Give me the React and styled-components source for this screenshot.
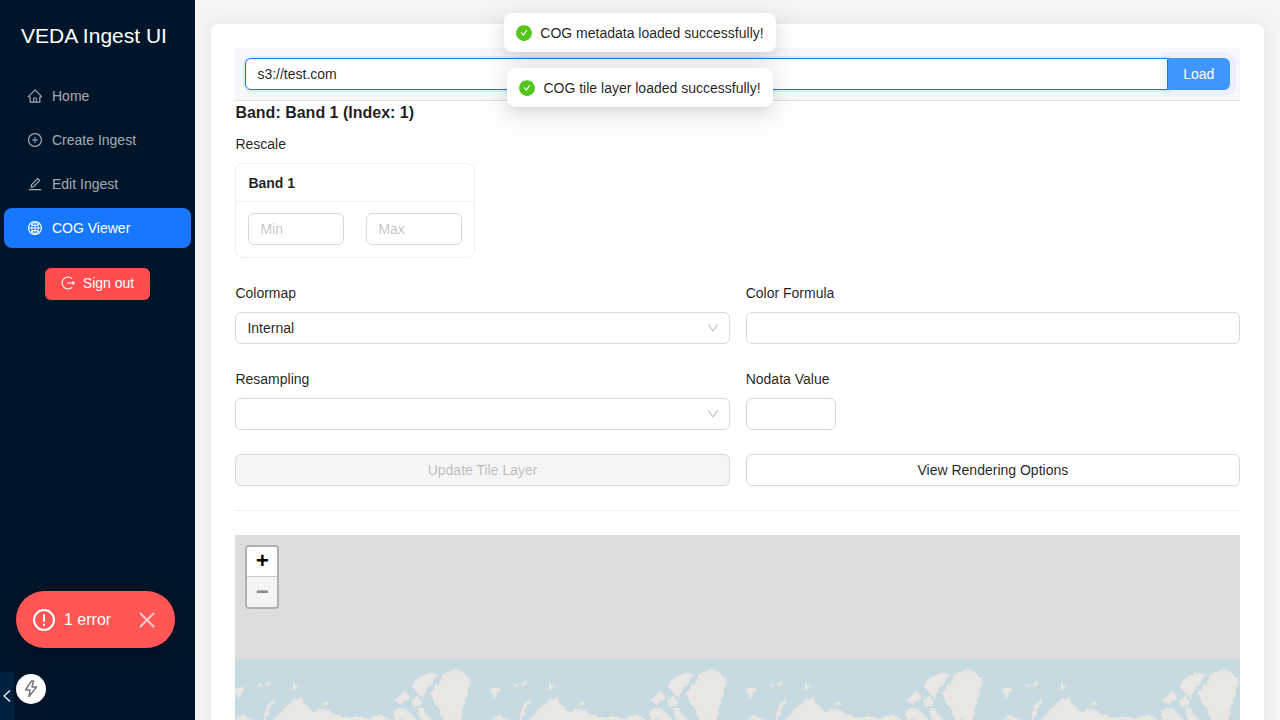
import React from 'react';
import styled, { createGlobalStyle } from 'styled-components';
import {
  AiOutlineHome, AiOutlinePlusCircle, AiOutlineEdit, AiOutlineGlobal,
  AiFillCheckCircle, AiOutlineDown,
} from 'react-icons/ai';

const Global = createGlobalStyle`
  html, body { margin: 0; padding: 0; height: 720px; overflow: hidden; background: #f5f5f5; }
  * { box-sizing: border-box; }
  body { font-family: "Liberation Sans", Arial, sans-serif; font-size: 14px; color: rgba(0,0,0,.88); }
`;

const Shell = styled.div`
  display: flex;
  width: 1280px;
  height: 720px;
  overflow: hidden;
  position: relative;
`;

const Sider = styled.aside`
  width: 195px;
  flex: none;
  height: 720px;
  background: #001529;
  display: flex;
  flex-direction: column;
  position: relative;
`;

const Brand = styled.div`
  color: #fff;
  font-size: 21px;
  line-height: 24px;
  padding: 24px 0 0 21px;
  height: 76px;
`;

const Menu = styled.nav`
  display: flex;
  flex-direction: column;
  gap: 4px;
  padding: 0 4px;
`;

const MenuItem = styled.div`
  height: 40px;
  border-radius: 8px;
  padding-left: 23px;
  display: flex;
  align-items: center;
  gap: 9px;
  color: ${p => (p.$active ? '#fff' : 'rgba(255,255,255,.65)')};
  background: ${p => (p.$active ? '#1677ff' : 'transparent')};
  svg { width: 16px; height: 16px; flex: none; }
`;

const SignOutRow = styled.div`
  display: flex;
  padding: 20px 0 0 45px;
`;

const SignOut = styled.button`
  width: 105px;
  height: 32px;
  border: 0;
  border-radius: 6px;
  background: #ff4d4f;
  color: #fff;
  font: 14px "Liberation Sans", Arial, sans-serif;
  display: flex;
  align-items: center;
  justify-content: center;
  gap: 8px;
  padding: 0 0 2px;
`;

const ErrorPill = styled.div`
  position: absolute;
  left: 16px;
  top: 591px;
  width: 159px;
  height: 57px;
  border-radius: 29px;
  background: #ff5555;
  color: #fff;
  display: flex;
  align-items: center;
  padding-left: 17px;
  font-size: 16px;
  box-shadow: 0 4px 24px rgba(0,0,0,.25);
`;

const PillText = styled.span`
  margin-left: 9px;
  width: 75px;
`;

const Collapse = styled.div`
  position: absolute;
  left: 0;
  top: 672px;
  width: 14px;
  height: 48px;
  background: #002140;
  display: flex;
  align-items: center;
  justify-content: center;
`;

const DevBadge = styled.div`
  position: absolute;
  left: 16px;
  top: 674px;
  width: 30px;
  height: 30px;
  border-radius: 50%;
  background: #fff;
  display: flex;
  align-items: center;
  justify-content: center;
  box-shadow: 0 2px 8px rgba(0,0,0,.2);
`;

const Main = styled.main`
  flex: 1;
  min-width: 0;
  padding: 24px 16px 0;
`;

const Card = styled.section`
  background: #fff;
  border-radius: 8px 8px 0 0;
  padding: 24px 24px 24px 24.4px;
  height: 720px;
  box-shadow: 0 0 20px rgba(0,0,0,.07);
`;

const UrlBar = styled.div`
  background: #f6f8fc;
  height: 53px;
  padding: 10px;
  border-bottom: 1px solid #dcdcdc;
  display: flex;
`;

const UrlGroup = styled.div`
  display: flex;
  flex: 1;
  height: 32px;
`;

const UrlInput = styled.div`
  flex: 1;
  border: 1px solid #1677ff;
  border-radius: 6px 0 0 6px;
  background: #fff;
  padding: 0 11px;
  line-height: 30px;
  box-shadow: 0 0 0 2px rgba(5,145,255,.1);
`;

const LoadButton = styled.button`
  width: 62.4px;
  border: 0;
  border-radius: 0 6px 6px 0;
  background: #4096ff;
  color: #fff;
  font: 14px "Liberation Sans", Arial, sans-serif;
  padding: 0;
  position: relative;
  box-shadow: 0 0 0 6px rgba(40,90,255,.05);
`;

const BandTitle = styled.div`
  font-size: 16px;
  font-weight: 700;
  line-height: 24px;
`;

const FieldLabel = styled.div`
  line-height: 22px;
  height: 22px;
  margin-bottom: 8px;
`;

const RescaleLabel = styled(FieldLabel)`
  margin-top: 8px;
`;

const BandCard = styled.div`
  width: 240px;
  height: 95px;
  margin-bottom: 24px;
  border: 1px solid #f0f0f0;
  border-radius: 8px;
`;

const BandHead = styled.div`
  height: 38px;
  border-bottom: 1px solid #f0f0f0;
  padding-left: 12px;
  font-weight: 700;
  line-height: 38px;
`;

const BandBody = styled.div`
  display: flex;
  justify-content: space-between;
  padding: 11px 12px 0;
`;

const Box = styled.div`
  height: 32px;
  width: ${p => p.$w || '100%'};
  border: 1px solid #d9d9d9;
  border-radius: 6px;
  padding: 0 11px;
  line-height: 30px;
  color: ${p => (p.$ph ? 'rgba(0,0,0,.25)' : 'rgba(0,0,0,.88)')};
  background: #fff;
  position: relative;
  display: flex;
  align-items: center;
`;

const Chevron = styled(AiOutlineDown)`
  position: absolute;
  right: 9px;
  top: 8px;
  width: 14px;
  height: 14px;
  color: rgba(0,0,0,.25);
`;

const FormGrid = styled.div`
  display: grid;
  grid-template-columns: 1fr 1fr;
  column-gap: 16px;
  row-gap: 24px;
`;

const Field = styled.div`
  min-width: 0;
`;

const Btn = styled.button`
  height: 32px;
  width: 100%;
  border: 1px solid #d9d9d9;
  border-radius: 6px;
  font: 14px "Liberation Sans", Arial, sans-serif;
  padding: 0;
  color: ${p => (p.disabled ? 'rgba(0,0,0,.25)' : 'rgba(0,0,0,.88)')};
  background: ${p => (p.disabled ? 'rgba(0,0,0,.04)' : '#fff')};
  box-shadow: ${p => (p.disabled ? 'none' : '0 2px 0 rgba(0,0,0,.02)')};
`;

const Divider = styled.hr`
  border: 0;
  border-top: 1px solid #f0f0f0;
  margin: 24px 0;
`;

const MapBox = styled.div`
  background: #dddddd;
  height: 185px;
  position: relative;
  overflow: hidden;
  padding-top: 124px;
`;

const Ocean = styled.svg`
  display: block;
  width: 100%;
  height: 61px;
  background: #c8dae1;
`;

const Zoom = styled.div`
  position: absolute;
  left: 10px;
  top: 10px;
  width: 34px;
  border: 2px solid rgba(0,0,0,.2);
  border-radius: 4px;
  background-clip: padding-box;
`;

const ZoomBtn = styled.div`
  height: 30px;
  display: flex;
  align-items: center;
  justify-content: center;
  font: 700 22px "Liberation Mono", monospace;
  padding-top: 2px;
  background: ${p => (p.$off ? '#f4f4f4' : '#fff')};
  color: ${p => (p.$off ? '#888' : '#000')};
  border-bottom: ${p => (p.$off ? '0' : '1px solid #ccc')};
  border-radius: ${p => (p.$off ? '0 0 2px 2px' : '2px 2px 0 0')};
`;

const Toasts = styled.div`
  position: absolute;
  left: 0;
  right: 0;
  top: 13px;
  display: flex;
  flex-direction: column;
  align-items: center;
  gap: 16px;
`;

const Toast = styled.div`
  height: 39px;
  padding: 0 12px;
  border-radius: 8px;
  background: #fff;
  display: flex;
  align-items: center;
  gap: 8px;
  box-shadow: 0 6px 16px rgba(0,0,0,.08), 0 3px 6px -4px rgba(0,0,0,.12), 0 9px 28px 8px rgba(0,0,0,.05);
  svg { width: 18px; height: 18px; margin: 0 -1px; color: #52c41a; }
`;

const Land = () => (
  <g fill="#e8e7e3" filter="url(#coast)">
    {/* Greenland */}
    <path d="M10 34L16 27 20 23 23 16 28 13 35 10 43 12 48 19 52 23 48 29 46 39 43 50 41 61 23 61 20 52 15 44Z" />
    {/* Canadian arctic islands */}
    <path d="M-8 28L-3 19 8 14 17 15 15 20 8 29 3 40-3 33Z" />
    <path d="M-25 41L-15 32-10 38-19 46Z" />
    <path d="M-9 41L-3 36 2 43 0 47-6 47Z" />
    <path d="M-27 51L-15 49-3 61-25 61Z" />
    <path d="M-3 49L3 49 11 61 0 61Z" />
    <path d="M-52 59L-39 56-29 61-52 61Z" />
    {/* Svalbard, Franz Josef, Novaya Zemlya */}
    <path d="M69 31L80 28 78 34 75 39 72 34Z" />
    <path d="M93 27L97 24 99 27 95 28ZM101 25L106 22 107 26 102 27Z" />
    <path d="M99 59L102 49 109 40 110 43 105 51 102 61Z" />
    {/* Scandinavia and Russia */}
    <path d="M71 61L78 56 90 61Z" />
    <path d="M108 62L118 52 130 40 137 39 143 48 150 53 160 49 167 54 180 58 197 58 217 60 220 62Z" />
    <path d="M129 24L133 27 131 31 129 29Z" />
    <path d="M158 44L164 43 165 46 160 47Z" />
  </g>
);

const OFFSETS = [-71, 185, 441, 697, 953, 1209];

export default function App() {
  return (
    <Shell>
      <Global />
      <Sider>
        <Brand>VEDA Ingest UI</Brand>
        <Menu>
          <MenuItem><AiOutlineHome />Home</MenuItem>
          <MenuItem><AiOutlinePlusCircle />Create Ingest</MenuItem>
          <MenuItem><AiOutlineEdit />Edit Ingest</MenuItem>
          <MenuItem $active><AiOutlineGlobal />COG Viewer</MenuItem>
        </Menu>
        <SignOutRow>
          <SignOut>
            <svg width="14" height="14" viewBox="0 0 14 14" fill="none" stroke="#fff" strokeWidth="1.1">
              <path d="M11.2 2.6A6 6 0 1 0 11.2 11.4" />
              <path d="M6.5 7H13.2M11.6 5.4L13.2 7 11.6 8.6" />
            </svg>
            Sign out
          </SignOut>
        </SignOutRow>
        <ErrorPill>
          <svg width="22" height="22" viewBox="0 0 22 22" fill="none" stroke="#fff" strokeWidth="2" strokeLinecap="round">
            <circle cx="11" cy="11" r="10" />
            <path d="M11 6v6M11 15.5v.5" />
          </svg>
          <PillText>1 error</PillText>
          <svg width="16" height="16" viewBox="0 0 16 16" fill="none" stroke="rgba(255,255,255,.7)" strokeWidth="2" strokeLinecap="round">
            <path d="M1.5 1.5l13 13M14.5 1.5l-13 13" />
          </svg>
        </ErrorPill>
        <Collapse>
          <svg width="10" height="14" viewBox="0 0 10 14" fill="none" stroke="#fff" strokeWidth="1.2">
            <path d="M8 1.5L2 7l6 5.5" />
          </svg>
        </Collapse>
        <DevBadge>
          <svg width="14" height="18" viewBox="0 0 14 18" fill="none" stroke="#777" strokeWidth="1.5" strokeLinejoin="round">
            <path d="M7.5 1L1.5 10H6L5 16.5 12.5 7H8L9.5 1Z" />
          </svg>
        </DevBadge>
      </Sider>
      <Main>
        <Card>
          <UrlBar>
            <UrlGroup>
              <UrlInput>s3://test.com</UrlInput>
              <LoadButton>Load</LoadButton>
            </UrlGroup>
          </UrlBar>
          <BandTitle>Band: Band 1 (Index: 1)</BandTitle>
          <RescaleLabel>Rescale</RescaleLabel>
          <BandCard>
            <BandHead>Band 1</BandHead>
            <BandBody>
              <Box $w="96px" $ph>Min</Box>
              <Box $w="96px" $ph>Max</Box>
            </BandBody>
          </BandCard>
          <FormGrid>
            <Field>
              <FieldLabel>Colormap</FieldLabel>
              <Box>Internal<Chevron /></Box>
            </Field>
            <Field>
              <FieldLabel>Color Formula</FieldLabel>
              <Box />
            </Field>
            <Field>
              <FieldLabel>Resampling</FieldLabel>
              <Box><Chevron /></Box>
            </Field>
            <Field>
              <FieldLabel>Nodata Value</FieldLabel>
              <Box $w="90px" />
            </Field>
            <Btn disabled>Update Tile Layer</Btn>
            <Btn>View Rendering Options</Btn>
          </FormGrid>
          <Divider />
          <MapBox>
            <Ocean viewBox="0 0 1005 61" preserveAspectRatio="none">
              <defs>
                <filter id="coast" filterUnits="userSpaceOnUse" x="-60" y="0" width="300" height="70">
                  <feTurbulence type="fractalNoise" baseFrequency="0.28" numOctaves="2" seed="4" result="n" />
                  <feDisplacementMap in="SourceGraphic" in2="n" scale="5" xChannelSelector="R" yChannelSelector="G" />
                  <feGaussianBlur stdDeviation="0.4" />
                </filter>
              </defs>
              {OFFSETS.map(x => (
                <g key={x} transform={`translate(${x} 0)`}><Land /></g>
              ))}
            </Ocean>
            <Zoom>
              <ZoomBtn>+</ZoomBtn>
              <ZoomBtn $off>−</ZoomBtn>
            </Zoom>
          </MapBox>
        </Card>
      </Main>
      <Toasts>
        <Toast><AiFillCheckCircle />COG metadata loaded successfully!</Toast>
        <Toast><AiFillCheckCircle />COG tile layer loaded successfully!</Toast>
      </Toasts>
    </Shell>
  );
}
